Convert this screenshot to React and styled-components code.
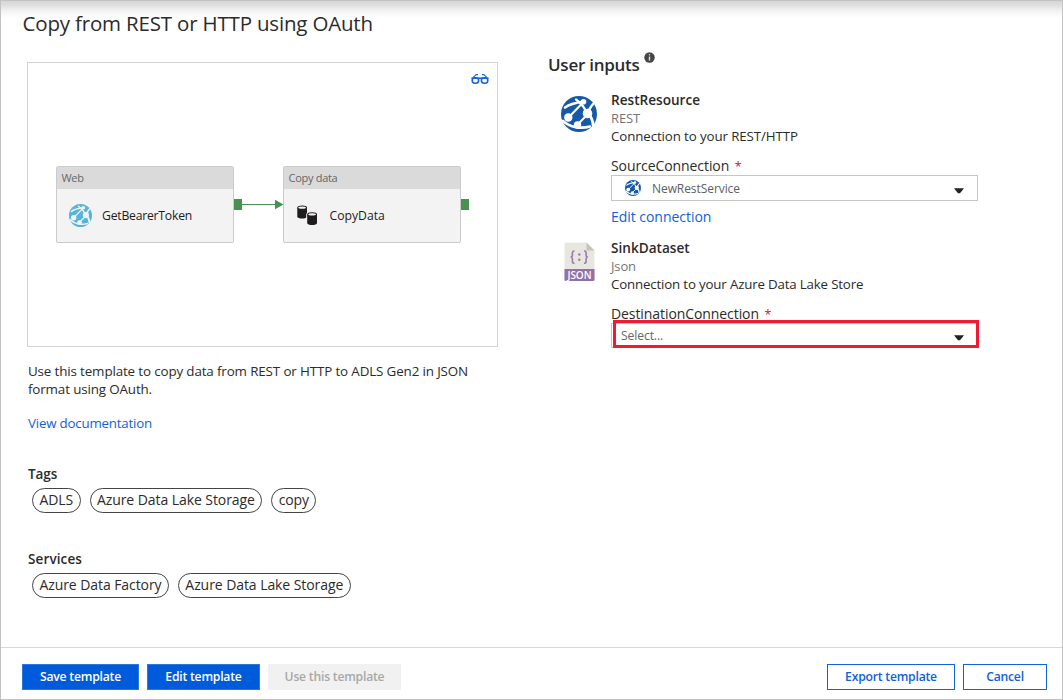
import React from "react";
import styled, { createGlobalStyle } from "styled-components";

const GlobalStyle = createGlobalStyle`
  *, *::after { box-sizing: border-box; }
  body {
    margin: 0;
    background: #fff;
    color: #2b2b2b;
    font-family: "Open Sans", "Noto Sans", sans-serif;
  }
`;

const Page = styled.div`
  display: flex;
  flex-direction: column;
  width: 1063px;
  height: 700px;
  border: 1px solid #c3c3c3;
  background: linear-gradient(#d6d6d6, #dedede 4px, #f3f3f3 10px, #fff 17px);
  overflow: hidden;
`;

const Title = styled.h1`
  margin: 0;
  padding: 6px 0 0 21.5px;
  height: 61px;
  font-size: 20.5px;
  font-weight: 400;
  line-height: 32px;
  letter-spacing: -0.18px;
  white-space: nowrap;
`;

const Main = styled.main`
  display: flex;
  flex: 1;
  min-height: 0;
`;

const Overview = styled.section`
  flex: none;
  width: 520px;
  padding-left: 26px;
`;

const Canvas = styled.div`
  position: relative;
  width: 471px;
  height: 285px;
  border: 1px solid #d3d3d3;
  background: #fff;
`;

const GlassesButton = styled.div`
  position: absolute;
  top: 10px;
  right: 8px;
  width: 18px;
  height: 12px;
  svg { display: block; }
`;

const Node = styled.div`
  position: absolute;
  left: ${(p) => p.$x}px;
  top: 103px;
  width: 178px;
  height: 77px;
  border: 1px solid #cbcbcb;
  border-radius: 2px;
  background: #f3f3f3;
  overflow: hidden;
`;

const NodeHeader = styled.div`
  height: 22px;
  padding-left: 4.5px;
  background: #dadada;
  color: #666;
  font-size: 11px;
  line-height: 22px;
  letter-spacing: -0.29px;
`;

const NodeBody = styled.div`
  display: flex;
  align-items: center;
  height: 52px;
  padding-left: ${(p) => p.$pad}px;
  gap: ${(p) => p.$gap}px;
  color: #1d1d1d;
  font-size: 12.2px;
  letter-spacing: ${(p) => p.$ls || 0}px;
`;

const Port = styled.div`
  position: absolute;
  left: ${(p) => p.$x}px;
  top: 136px;
  width: 8px;
  height: 11px;
  background: #489150;
`;

const Arrow = styled.svg`
  position: absolute;
  left: 214px;
  top: 136px;
`;

const Description = styled.p`
  margin: 15px 0 0 1px;
  width: 460px;
  font-size: 13.4px;
  line-height: 18px;
  letter-spacing: -0.14px;
`;

const Link = styled.a`
  display: block;
  color: #0f62d9;
  white-space: nowrap;
`;

const DocLink = styled(Link)`
  margin: 15px 0 0 1px;
  font-size: 13.3px;
  line-height: 20px;
  letter-spacing: -0.19px;
`;

const Group = styled.div`
  margin: ${(p) => p.$top}px 0 0 1px;
`;

const GroupTitle = styled.h2`
  margin: 0;
  font-size: 13.5px;
  font-weight: 600;
  line-height: 20px;
  letter-spacing: ${(p) => p.$ls || 0}px;
`;

const Pills = styled.div`
  display: flex;
  gap: 9px;
  margin: 4px 0 0 4px;
`;

const Pill = styled.span`
  height: 25px;
  padding: 0 6.4px;
  border: 1px solid #444;
  border-radius: 13px;
  font-size: 14px;
  line-height: 22px;
  letter-spacing: -0.07px;
  white-space: nowrap;
`;

const Inputs = styled.section`
  flex: none;
  width: 457px;
  padding-left: 27px;
`;

const InputsTitle = styled.h2`
  display: flex;
  gap: 4.5px;
  margin: -9px 0 0 0;
  height: 36px;
  font-size: 17px;
  font-weight: 600;
  line-height: 24px;
  letter-spacing: -0.26px;
  svg { margin-top: -1px; }
`;

const Resource = styled.div`
  display: flex;
  height: 148px;
`;

const ResourceIcon = styled.div`
  flex: none;
  width: 63px;
  padding: ${(p) => p.$top}px 0 0 ${(p) => p.$pad}px;
`;

const ResourceBody = styled.div`
  flex: none;
  width: 367px;
  padding-top: 1px;
  white-space: nowrap;
`;

const ResourceName = styled.div`
  font-size: 13.6px;
  font-weight: 600;
  line-height: 19px;
  letter-spacing: 0;
`;

const ResourceType = styled.div`
  color: #757575;
  font-size: 13px;
  line-height: 18px;
  letter-spacing: -0.13px;
`;

const ResourceText = styled.div`
  font-size: 13.3px;
  line-height: 19px;
  letter-spacing: ${(p) => p.$ls}px;
`;

const Label = styled.div`
  margin-top: 11px;
  height: 18px;
  font-size: 14px;
  line-height: 18px;
  letter-spacing: -0.08px;
`;

const Required = styled.span`
  margin-left: 5.5px;
  color: #d0202e;
  font-size: 12.5px;
`;

const Select = styled.div`
  display: flex;
  align-items: center;
  height: 26px;
  padding: 0 13px 0 12.5px;
  border: 1px solid #c6c6c6;
  background: #fff;
  color: #606060;
  font-size: 12px;
  letter-spacing: -0.07px;
`;

const SelectHighlighted = styled(Select)`
  position: relative;
  height: 25px;
  padding-left: 9px;
  color: #666;
  font-size: 12.2px;
  letter-spacing: -0.13px;
  &::after {
    content: "";
    position: absolute;
    left: 1px;
    top: -4px;
    width: 366px;
    height: 28px;
    border: 3px solid #ee1b33;
  }
`;

const SelectText = styled.span`
  flex: 1;
  margin-left: ${(p) => p.$gap || 0}px;
`;

const Caret = styled.svg`
  margin-top: 5px;
`;

const EditLink = styled(Link)`
  margin-top: 6px;
  font-size: 14px;
  line-height: 20px;
  letter-spacing: -0.04px;
`;

const Footer = styled.footer`
  display: flex;
  gap: 8px;
  height: 52px;
  padding: 16px 15px 0 21px;
  border-top: 1px solid #d8d8d8;
`;

const Button = styled.button`
  width: ${(p) => p.$w}px;
  height: 26px;
  padding: 0 0 1px;
  border: 1px solid #2d76df;
  background: #005bda;
  color: #fff;
  font: 600 12.2px/22px "Open Sans", sans-serif;
  letter-spacing: -0.22px;
  white-space: nowrap;
`;

const DisabledButton = styled(Button)`
  border-color: #f1f1f1;
  background: #f1f1f1;
  color: #a8a8a8;
`;

const OutlineButton = styled(Button)`
  border: 1px solid #1263d9;
  background: #fff;
  color: #0f62d9;
`;

const Spacer = styled.div`
  flex: 1;
`;

const GlobeSvg = styled.svg`
  display: block;
  flex: none;
`;

function Globe({ size, color, bg = "#fff" }) {
  return (
    <GlobeSvg width={size} height={size} viewBox="0 0 36 36" fill="none">
      <circle cx="18" cy="18" r="18" fill={color} />
      <g stroke={bg} strokeLinecap="round">
        <path d="M4 11.5C9 7.5 16 6.5 23 5.5" strokeWidth="2.6" />
        <path d="M8 21L22 6.5" strokeWidth="2" />
        <path d="M15 3.5C20 7 24 12 26 18" strokeWidth="2.2" />
        <path d="M27 16C29 12 31 9 32.5 7.5" strokeWidth="2.4" />
        <path d="M27 18C30.5 21 32 25 32 29" strokeWidth="2.8" />
        <path d="M26 19L16 29" strokeWidth="2" />
        <path d="M2 25C9 31.5 20 33 29 30.5" strokeWidth="2.6" />
      </g>
      <g fill={bg}>
        <circle cx="22.5" cy="5.8" r="2.8" />
        <circle cx="26.5" cy="17.5" r="4.8" />
        <circle cx="7.3" cy="21.5" r="4.2" />
        <circle cx="16.5" cy="29" r="3.7" />
      </g>
    </GlobeSvg>
  );
}

function Glasses() {
  return (
    <svg width="18" height="12" viewBox="0 0 18 12" fill="none" stroke="#1767dc" strokeWidth="1.6">
      <rect x="1.2" y="4.8" width="6.4" height="5.4" rx="2.6" />
      <rect x="10.4" y="4.8" width="6.4" height="5.4" rx="2.6" />
      <path d="M.4 5.2H17.6" />
      <path d="M2 4.6L5.2 1.6H7M16 4.6L12.8 1.6H11" strokeWidth="1.1" />
    </svg>
  );
}

const DatabasesSvg = styled.svg`
  flex: none;
`;

function Databases() {
  return (
    <DatabasesSvg width="21" height="21" viewBox="0 0 21 21">
      <path d="M.3 2.8V11.4C.3 14.1 10 14.1 10 11.4V2.8Z" fill="#1f1c1d" />
      <ellipse cx="5.15" cy="2.7" rx="4.4" ry="1.7" fill="#f3f3f3" stroke="#1f1c1d" strokeWidth="1.1" />
      <path d="M9.2 8.4V20.4H20.6V8.4Z" fill="#f3f3f3" />
      <path d="M10.2 9.6V17.9C10.2 20.7 20 20.7 20 17.9V9.6Z" fill="#1f1c1d" />
      <ellipse cx="15.1" cy="9.4" rx="4.4" ry="1.7" fill="#f3f3f3" stroke="#1f1c1d" strokeWidth="1.1" />
    </DatabasesSvg>
  );
}

const JsonSvg = styled.svg`
  display: block;
  text { font-family: "Open Sans", sans-serif; font-weight: 600; }
`;

function JsonFile() {
  return (
    <JsonSvg width="31" height="40" viewBox="0 0 31 40">
      <path d="M2 .5H22.5L30.5 8.5V37.5a1.5 1.5 0 0 1-1.5 1.5H2a1.5 1.5 0 0 1-1.5-1.5V2A1.5 1.5 0 0 1 2 .5Z" fill="#e7e7df" />
      <path d="M22.5 .5L30.5 8.5H22.5Z" fill="#c6c6b6" />
      <path d="M.5 27H30.5V37.5a1.5 1.5 0 0 1-1.5 1.5H2a1.5 1.5 0 0 1-1.5-1.5Z" fill="#9370a8" />
      <g stroke="#9c7aae" strokeWidth="1.6" fill="none">
        <path d="M10.5 9H9.8C8.6 9 8.4 9.8 8.4 10.8V13C8.4 14.2 7.8 15 6.6 15C7.8 15 8.4 15.8 8.4 17V19.3C8.4 20.4 8.7 21.2 9.8 21.2H10.5" />
        <path d="M20 9H20.7C21.9 9 22.1 9.8 22.1 10.8V13C22.1 14.2 22.7 15 23.9 15C22.7 15 22.1 15.8 22.1 17V19.3C22.1 20.4 21.8 21.2 20.7 21.2H20" />
      </g>
      <circle cx="15.3" cy="12.5" r="1.2" fill="#9c7aae" />
      <circle cx="15.3" cy="17.8" r="1.2" fill="#9c7aae" />
      <text x="15.5" y="36.6" fontSize="10" fill="#fff" textAnchor="middle" textLength="24">JSON</text>
    </JsonSvg>
  );
}

function Info() {
  return (
    <svg width="11" height="11" viewBox="0 0 11 11">
      <circle cx="5.5" cy="5.5" r="5.2" fill="#444" />
      <path d="M5.5 4.5V8.6" stroke="#ddd" strokeWidth="1.4" fill="none" />
      <circle cx="5.5" cy="2.8" r=".8" fill="#ddd" />
    </svg>
  );
}

function DownCaret() {
  return (
    <Caret width="10" height="6" viewBox="0 0 10 6">
      <path d="M0 .3H10L6 5.3H4Z" fill="#222" />
    </Caret>
  );
}

export default function App() {
  return (
    <>
      <GlobalStyle />
      <Page>
        <Title>Copy from REST or HTTP using OAuth</Title>
        <Main>
          <Overview>
            <Canvas>
              <GlassesButton><Glasses /></GlassesButton>
              <Node $x={28}>
                <NodeHeader>Web</NodeHeader>
                <NodeBody $pad={11.5} $gap={10.5} $ls={-0.22}>
                  <Globe size={23} color="#59b4d9" bg="#f3f3f3" />
                  GetBearerToken
                </NodeBody>
              </Node>
              <Node $x={255}>
                <NodeHeader>Copy data</NodeHeader>
                <NodeBody $pad={13} $gap={11.5}>
                  <Databases />
                  CopyData
                </NodeBody>
              </Node>
              <Port $x={206} />
              <Arrow width="42" height="11" viewBox="0 0 42 11">
                <path d="M0 5.5H34" stroke="#489150" />
                <path d="M33 .8L41.5 5.5L33 10.2Z" fill="#489150" />
              </Arrow>
              <Port $x={433} />
            </Canvas>
            <Description>
              Use this template to copy data from REST or HTTP to ADLS Gen2 in JSON
              format using OAuth.
            </Description>
            <DocLink>View documentation</DocLink>
            <Group $top={31}>
              <GroupTitle $ls={-0.1}>Tags</GroupTitle>
              <Pills>
                <Pill>ADLS</Pill>
                <Pill>Azure Data Lake Storage</Pill>
                <Pill>copy</Pill>
              </Pills>
            </Group>
            <Group $top={36}>
              <GroupTitle $ls={0.12}>Services</GroupTitle>
              <Pills>
                <Pill>Azure Data Factory</Pill>
                <Pill>Azure Data Lake Storage</Pill>
              </Pills>
            </Group>
          </Overview>
          <Inputs>
            <InputsTitle>User inputs<Info /></InputsTitle>
            <Resource>
              <ResourceIcon $top={7} $pad={13}><Globe size={36} color="#1659a8" /></ResourceIcon>
              <ResourceBody>
                <ResourceName>RestResource</ResourceName>
                <ResourceType>REST</ResourceType>
                <ResourceText $ls={-0.1}>Connection to your REST/HTTP</ResourceText>
                <Label>SourceConnection<Required>*</Required></Label>
                <Select>
                  <Globe size={16} color="#1659a8" />
                  <SelectText $gap={11.5}>NewRestService</SelectText>
                  <DownCaret />
                </Select>
                <EditLink>Edit connection</EditLink>
              </ResourceBody>
            </Resource>
            <Resource>
              <ResourceIcon $top={4.5} $pad={16}><JsonFile /></ResourceIcon>
              <ResourceBody>
                <ResourceName>SinkDataset</ResourceName>
                <ResourceType>Json</ResourceType>
                <ResourceText $ls={-0.17}>Connection to your Azure Data Lake Store</ResourceText>
                <Label>DestinationConnection<Required>*</Required></Label>
                <SelectHighlighted>
                  <SelectText>Select...</SelectText>
                  <DownCaret />
                </SelectHighlighted>
              </ResourceBody>
            </Resource>
          </Inputs>
        </Main>
        <Footer>
          <Button $w={117}>Save template</Button>
          <Button $w={113}>Edit template</Button>
          <DisabledButton $w={133}>Use this template</DisabledButton>
          <Spacer />
          <OutlineButton $w={128}>Export template</OutlineButton>
          <OutlineButton $w={84}>Cancel</OutlineButton>
        </Footer>
      </Page>
    </>
  );
}
